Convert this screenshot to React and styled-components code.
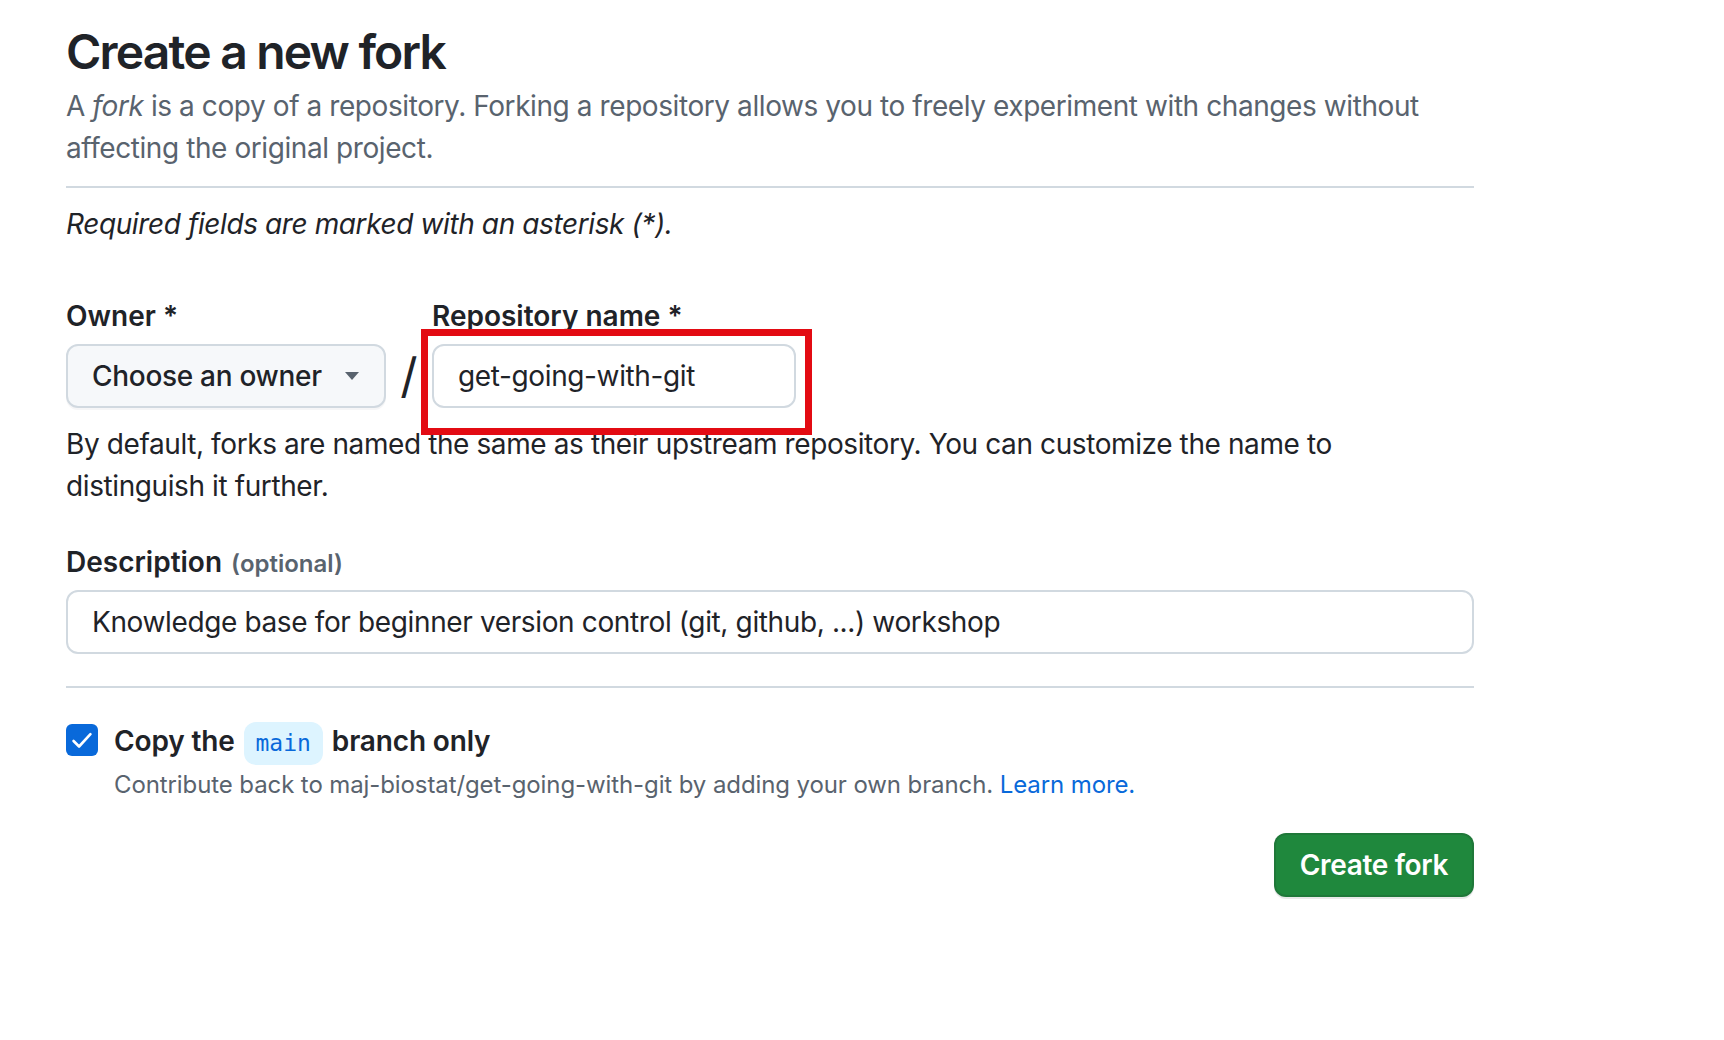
import React from "react";
import styled, { createGlobalStyle } from "styled-components";

const GlobalStyle = createGlobalStyle`
  html, body {
    margin: 0;
    padding: 0;
    background: #ffffff;
  }
  body {
    font-family: Inter, "Noto Sans", "Liberation Sans", sans-serif;
    color: #1f2328;
    -webkit-font-smoothing: antialiased;
  }
  * { box-sizing: border-box; }
`;

const Page = styled.main`
  width: 1408px;
  margin-left: 66px;
  padding-top: 22px;
  padding-bottom: 60px;
`;

const Subhead = styled.header`
  padding-bottom: 17px;
  border-bottom: 2px solid #d1d9e0;
`;

const Title = styled.h1`
  margin: 0;
  font-size: 48px;
  line-height: 60px;
  font-weight: 600;
  letter-spacing: -1.8px;
  color: #1f2328;
`;

const Lead = styled.p`
  margin: 3px 0 0;
  font-size: 28px;
  line-height: 42px;
  letter-spacing: -0.42px;
  color: #59636e;
`;

const Note = styled.p`
  margin: ${(p) => p.$top || 0}px 0 0;
  font-size: 28px;
  line-height: 42px;
  letter-spacing: -0.4px;
  font-style: ${(p) => (p.$italic ? "italic" : "normal")};
  color: #1f2328;
`;

const FieldRow = styled.div`
  display: flex;
  align-items: flex-end;
  margin-top: 50px;
`;

const Field = styled.div`
  display: flex;
  flex-direction: column;
  width: ${(p) => p.$width || "100%"};
  margin-top: ${(p) => p.$top || 0}px;
`;

const Label = styled.label`
  display: block;
  font-size: 28px;
  line-height: 42px;
  font-weight: 600;
  color: #1f2328;
  margin-bottom: 7px;
  white-space: nowrap;
`;

const Optional = styled.span`
  font-size: 24px;
  line-height: 1;
  font-weight: 600;
  color: #59636e;
  margin-left: 2px;
`;

const SelectButton = styled.button`
  display: flex;
  align-items: center;
  justify-content: space-between;
  height: 64px;
  width: 100%;
  padding: 0 25px 0 24px;
  font-family: inherit;
  font-size: 28px;
  font-weight: 500;
  letter-spacing: -0.3px;
  color: #1f2328;
  background: #f6f8fa;
  border: 2px solid #d1d9e0;
  border-radius: 12px;
  box-shadow: 0 2px 0 rgba(31, 35, 40, 0.04);
  cursor: pointer;
`;

const Caret = styled.span`
  width: 0;
  height: 0;
  border-left: 7px solid transparent;
  border-right: 7px solid transparent;
  border-top: 8px solid #59636e;
`;

const Slash = styled.span`
  width: 46px;
  height: 64px;
  display: flex;
  align-items: center;
  justify-content: center;
  font-size: 48px;
  line-height: 1;
  color: #1f2328;
`;

const InputWrap = styled.div`
  position: relative;
`;

const TextInput = styled.input`
  display: block;
  width: 100%;
  height: 64px;
  padding: 0 24px;
  font-family: inherit;
  font-size: 28px;
  letter-spacing: -0.37px;
  color: #1f2328;
  background: #ffffff;
  border: 2px solid #d1d9e0;
  border-radius: 12px;
  outline: none;
`;

const Highlight = styled.span`
  position: absolute;
  left: -11px;
  right: -16px;
  top: -15px;
  bottom: -27px;
  border: 7px solid #e30b13;
  pointer-events: none;
`;

const Divider = styled.hr`
  margin: 32px 0 0;
  border: 0;
  border-top: 2px solid #d1d9e0;
`;

const CheckRow = styled.div`
  display: flex;
  align-items: flex-start;
  gap: 16px;
  margin-top: 32px;
`;

const CheckBox = styled.span`
  flex: none;
  width: 32px;
  height: 32px;
  margin-top: 4px;
  border-radius: 6px;
  background: #0969da;
  display: flex;
  align-items: center;
  justify-content: center;
`;

const CheckText = styled.div`
  display: flex;
  flex-direction: column;
`;

const CheckLabel = styled.div`
  font-size: 28px;
  line-height: 42px;
  font-weight: 600;
  letter-spacing: -0.15px;
  color: #1f2328;
`;

const Branch = styled.code`
  display: inline-block;
  font-family: "DejaVu Sans Mono", "Liberation Mono", monospace;
  font-size: 23px;
  font-weight: 400;
  line-height: 35px;
  letter-spacing: 0;
  padding: 4px 12px;
  margin: -6px 2px;
  border-radius: 12px;
  background: #ddf4ff;
  color: #0969da;
  vertical-align: 0;
`;

const Hint = styled.div`
  margin-top: 5px;
  font-size: 24px;
  line-height: 36px;
  letter-spacing: -0.1px;
  color: #59636e;
`;

const Link = styled.a`
  color: #0969da;
  text-decoration: none;
`;

const Actions = styled.div`
  display: flex;
  justify-content: flex-end;
  margin-top: 30px;
`;

const PrimaryButton = styled.button`
  height: 64px;
  padding: 0 24px;
  font-family: inherit;
  font-size: 28px;
  font-weight: 600;
  letter-spacing: -0.35px;
  color: #ffffff;
  background: #1f883d;
  border: 2px solid rgba(31, 35, 40, 0.15);
  border-radius: 12px;
  box-shadow: 0 2px 0 rgba(31, 35, 40, 0.1);
  cursor: pointer;
`;

export default function App() {
  return (
    <>
      <GlobalStyle />
      <Page>
        <Subhead>
          <Title>Create a new fork</Title>
          <Lead>
            A <em>fork</em> is a copy of a repository. Forking a repository
            allows you to freely experiment with changes without affecting the
            original project.
          </Lead>
        </Subhead>

        <Note $italic $top={15}>
          Required fields are marked with an asterisk (*).
        </Note>

        <FieldRow>
          <Field $width="320px">
            <Label>Owner *</Label>
            <SelectButton type="button">
              <span>Choose an owner</span>
              <Caret />
            </SelectButton>
          </Field>
          <Slash>/</Slash>
          <Field $width="364px">
            <Label>Repository name *</Label>
            <InputWrap>
              <TextInput readOnly defaultValue="get-going-with-git" />
              <Highlight />
            </InputWrap>
          </Field>
        </FieldRow>

        <Note $top={15}>
          By default, forks are named the same as their upstream repository.
          You can customize the name to distinguish it further.
        </Note>

        <Field $top={34}>
          <Label>
            Description <Optional>(optional)</Optional>
          </Label>
          <TextInput
            readOnly
            defaultValue="Knowledge base for beginner version control (git, github, ...) workshop"
          />
        </Field>

        <Divider />

        <CheckRow>
          <CheckBox>
            <svg width="26" height="26" viewBox="0 0 16 16" fill="none">
              <path
                d="M2.8 8.6l3.4 3.4 7-7.6"
                stroke="#ffffff"
                strokeWidth="1.6"
                strokeLinecap="round"
                strokeLinejoin="round"
              />
            </svg>
          </CheckBox>
          <CheckText>
            <CheckLabel>
              Copy the <Branch>main</Branch> branch only
            </CheckLabel>
            <Hint>
              Contribute back to maj-biostat/get-going-with-git by adding your
              own branch. <Link href="#">Learn more.</Link>
            </Hint>
          </CheckText>
        </CheckRow>

        <Actions>
          <PrimaryButton type="button">Create fork</PrimaryButton>
        </Actions>
      </Page>
    </>
  );
}
